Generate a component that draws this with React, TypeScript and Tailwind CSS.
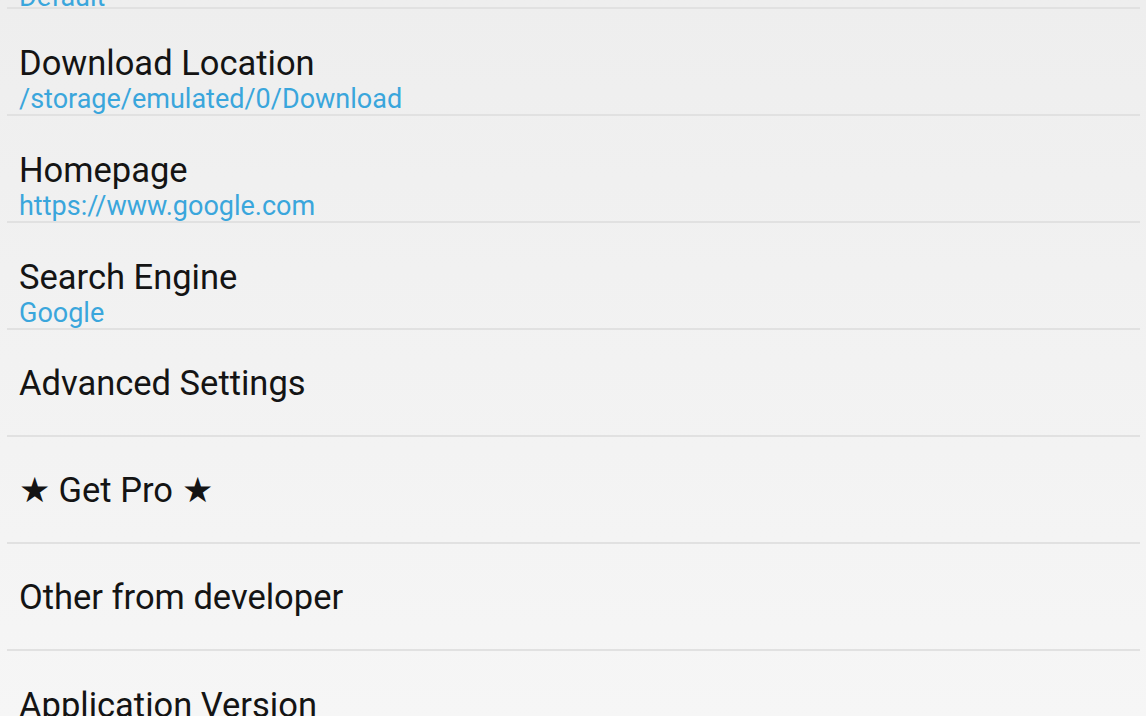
type Pref = { title: string; summary?: string };

const prefs: Pref[] = [
  { title: "Download Location", summary: "/storage/emulated/0/Download" },
  { title: "Homepage", summary: "https://www.google.com" },
  { title: "Search Engine", summary: "Google" },
  { title: "Advanced Settings" },
  { title: "★ Get Pro ★" },
  { title: "Other from developer" },
  { title: "Application Version", summary: "1.0" },
];

function Divider() {
  return <div className="ml-[7px] mr-[6px] h-[2px] bg-[#e1e1e1]" />;
}

function Row({ title, summary }: Pref) {
  if (!summary) {
    return (
      <div className="flex h-[105px] items-center px-[19px]">
        <span className="text-[34.5px] leading-[40px] text-[#141414]">{title}</span>
      </div>
    );
  }
  return (
    <div className="flex h-[105px] flex-col px-[19px] pt-[34px]">
      <span className="text-[34.5px] leading-[40px] text-[#141414]">{title}</span>
      <span className="text-[27px] leading-[32px] text-[#3aa6dc]">{summary}</span>
    </div>
  );
}

export default function App() {
  return (
    <div
      className="h-[716px] w-[1146px] overflow-hidden bg-gradient-to-b from-[#eeeeee] to-[#f6f6f6]"
      style={{ fontFamily: "Roboto, 'Noto Sans', sans-serif" }}
    >
      <div className="flex h-[7px] flex-col justify-end overflow-hidden px-[19px]">
        <span className="shrink-0 text-[27px] leading-[32px] text-[#3aa6dc] -mb-[6px]">Default</span>
      </div>
      {prefs.map((p) => (
        <div key={p.title}>
          <Divider />
          <Row {...p} />
        </div>
      ))}
    </div>
  );
}
